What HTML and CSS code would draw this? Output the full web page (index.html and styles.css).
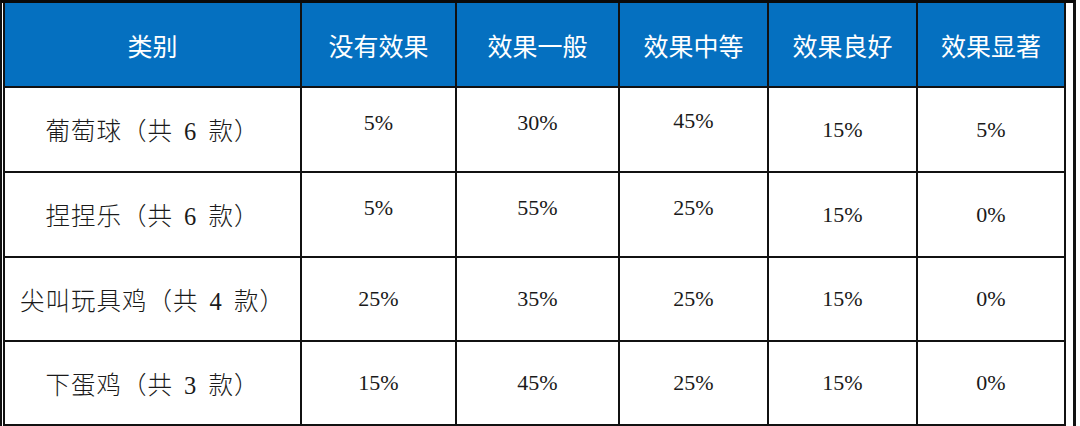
FILE: index.html
```html
<!DOCTYPE html>
<html lang="zh-CN">
<head>
<meta charset="utf-8">
<title>效果统计表</title>
<link rel="stylesheet" href="styles.css">
</head>
<body>
<div class="page">
  <div class="grid" role="table">
    <div class="cell head">类别</div>
    <div class="cell head">没有效果</div>
    <div class="cell head">效果一般</div>
    <div class="cell head">效果中等</div>
    <div class="cell head">效果良好</div>
    <div class="cell head">效果显著</div>

    <div class="cell name">葡萄球（共 6 款）</div>
    <div class="cell num up">5%</div>
    <div class="cell num up">30%</div>
    <div class="cell num up2">45%</div>
    <div class="cell num">15%</div>
    <div class="cell num">5%</div>

    <div class="cell name">捏捏乐（共 6 款）</div>
    <div class="cell num up">5%</div>
    <div class="cell num up">55%</div>
    <div class="cell num up">25%</div>
    <div class="cell num">15%</div>
    <div class="cell num">0%</div>

    <div class="cell name">尖叫玩具鸡（共 4 款）</div>
    <div class="cell num">25%</div>
    <div class="cell num">35%</div>
    <div class="cell num">25%</div>
    <div class="cell num">15%</div>
    <div class="cell num">0%</div>

    <div class="cell name">下蛋鸡（共 3 款）</div>
    <div class="cell num">15%</div>
    <div class="cell num">45%</div>
    <div class="cell num">25%</div>
    <div class="cell num">15%</div>
    <div class="cell num">0%</div>
  </div>
</div>
</body>
</html>
```

FILE: styles.css
```css
html, body {
  margin: 0;
  padding: 0;
  background: #ffffff;
}

.page {
  display: flex;
  width: fit-content;
  height: 426px;
  box-sizing: border-box;
  border-top: 3px solid #0a0a0a;
  border-left: 2px solid #111111;
  border-right: 3px solid #111111;
  padding-left: 1px;
  padding-right: 7px;
}

.grid {
  display: grid;
  grid-template-columns: 297px 155px 163px 149px 149px 148px;
  grid-template-rows: 85px 85px 85px 84px 84px;
  border-left: 2px solid #111111;
  align-self: flex-start;
}

.cell {
  box-sizing: border-box;
  border-right: 2px solid #111111;
  border-bottom: 2px solid #111111;
  display: flex;
  align-items: center;
  justify-content: center;
  color: #1a1a1a;
  font-family: "Liberation Serif", "Noto Sans CJK SC", serif;
  font-size: 22px;
}

.head {
  background: #0570c0;
  color: #ffffff;
  font-family: "Noto Sans CJK SC", sans-serif;
  font-size: 25px;
  font-weight: 400;
}

.name {
  font-size: 24.5px;
  font-weight: 300;
  word-spacing: 4px;
  letter-spacing: 1px;
}

.num {
  font-size: 22px;
  font-weight: 300;
}

.up {
  padding-bottom: 14px;
}

.up2 {
  padding-bottom: 18px;
}
```
